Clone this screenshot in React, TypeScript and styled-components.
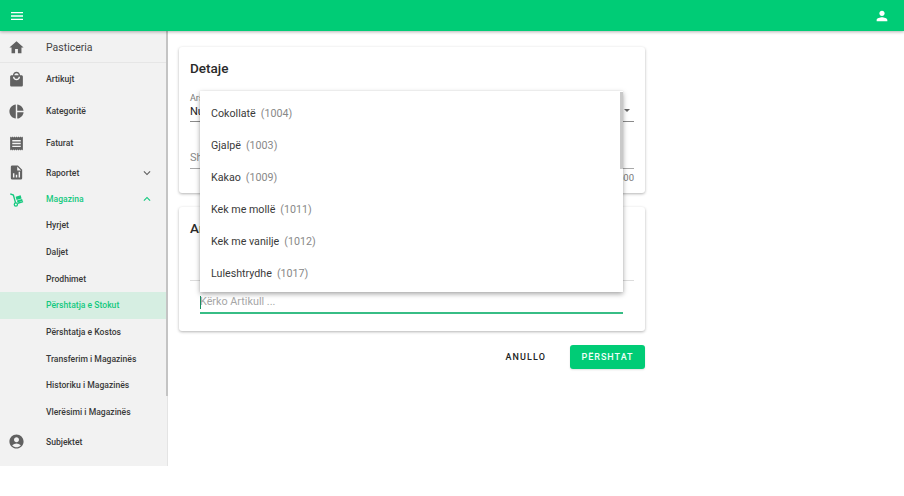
import styled, {createGlobalStyle} from "styled-components";
import type {ReactNode} from "react";
import {
    MdAccountCircle,
    MdExpandLess,
    MdExpandMore,
    MdHome,
    MdLocalMall,
    MdMenu,
    MdPerson,
    MdPieChart,
    MdReceipt,
} from "react-icons/md";

const GREEN = "#00cc76";

const GlobalStyle = createGlobalStyle`
    html, body {
        margin: 0;
        padding: 0;
        height: 100%;
        background: #fff;
        font-family: Roboto, "Liberation Sans", sans-serif;
        overflow: hidden;
    }
    * {
        box-sizing: border-box;
    }
`;

const Header = styled.header`
    display: flex;
    align-items: center;
    justify-content: space-between;
    height: 31px;
    padding: 0 14px 0 9px;
    background: ${GREEN};
    color: #fff;
    box-shadow: 0 1px 3px rgba(0, 0, 0, 0.3);
    position: relative;
    z-index: 2;
`;

const Body = styled.div`
    display: flex;
    align-items: flex-start;
`;

const Sidebar = styled.nav`
    position: relative;
    width: 168px;
    flex-shrink: 0;
    height: 435px;
    background: #f2f2f2;
    border-right: 1px solid #e4e4e4;
`;

const ScrollThumb = styled.div`
    position: absolute;
    top: 0;
    right: -1px;
    width: 2px;
    height: 365px;
    background: #c4c4c4;
`;

const BrandRow = styled.div`
    display: flex;
    align-items: center;
    height: 32px;
    padding: 1px 0 0 8px;
    border-bottom: 1px solid #e6e6e6;
    color: #616161;
`;

const BrandName = styled.span`
    margin-left: 21px;
    font-size: 10.5px;
    color: #444;
`;

const NavRow = styled.div<{$height: number; $active?: boolean; $selected?: boolean}>`
    display: flex;
    align-items: center;
    height: ${p => p.$height}px;
    padding: 0 13px 0 8px;
    font-size: 8.6px;
    font-weight: 500;
    color: ${p => (p.$active || p.$selected ? "#14c97f" : "#3a3a3a")};
    background: ${p => (p.$selected ? "#d6eee2" : "transparent")};
`;

const NavIcon = styled.span<{$active?: boolean}>`
    display: flex;
    align-items: center;
    justify-content: center;
    width: 17px;
    height: 17px;
    margin-right: 21px;
    color: ${p => (p.$active ? "#14c97f" : "#616161")};
`;

const NavLabel = styled.span<{$sub?: boolean}>`
    flex: 1;
    margin-left: ${p => (p.$sub ? "38px" : "0")};
    white-space: nowrap;
`;

const Chevron = styled.span<{$active?: boolean}>`
    display: flex;
    color: ${p => (p.$active ? "#14c97f" : "#616161")};
`;

const Main = styled.main`
    width: 477px;
    padding: 16px 0 0 11px;
`;

const Card = styled.section`
    background: #fff;
    border-radius: 3px;
    padding: 0 11px;
    margin-bottom: 14px;
    box-shadow: 0 1px 3px rgba(0, 0, 0, 0.3);
`;

const DetailsCard = styled(Card)`
    height: 146px;
    padding-top: 13px;
`;

const ItemsCard = styled(Card)`
    height: 124px;
    padding-top: 13px;
`;

const CardTitle = styled.h2`
    margin: 0;
    font-size: 13.5px;
    line-height: 17px;
    font-weight: 500;
    color: #2a2a2a;
`;

const SelectField = styled.div`
    margin-top: 16px;
    height: 29px;
    border-bottom: 1px solid #8a8a8a;
    position: relative;
`;

const FieldLabel = styled.div`
    font-size: 9px;
    line-height: 10px;
    color: #777;
`;

const FieldValue = styled.div`
    margin-top: 2px;
    font-size: 11px;
    line-height: 14px;
    color: #222;
`;

const SelectArrow = styled.span`
    position: absolute;
    right: 4px;
    top: 16px;
    width: 0;
    height: 0;
    border-left: 3.5px solid transparent;
    border-right: 3.5px solid transparent;
    border-top: 3.5px solid #666;
`;

const NotesField = styled.div`
    margin-top: 29px;
    height: 18px;
    border-bottom: 1px solid #a8a8a8;
    font-size: 11px;
    line-height: 14px;
    color: #888;
`;

const Counter = styled.div`
    margin-top: 3px;
    text-align: right;
    font-size: 9.5px;
    line-height: 11px;
    color: #777;
`;

const Divider = styled.div`
    margin-top: 43px;
    height: 1px;
    background: #dcdcdc;
`;

const SearchField = styled.div`
    position: relative;
    margin: 12px 11px 0 10px;
    height: 21px;
    border-bottom: 2px solid #37bd85;
    font-size: 10.8px;
    line-height: 18px;
    color: #a6a6a6;
`;

const Caret = styled.span`
    position: absolute;
    left: 0;
    top: 3px;
    width: 1px;
    height: 13px;
    background: #1a8f5f;
`;

const Suggestions = styled.ul`
    position: absolute;
    left: 0;
    right: 0;
    bottom: 20px;
    height: 201px;
    margin: 0;
    padding: 7px 0 0;
    list-style: none;
    background: #fff;
    box-shadow: 0 2px 5px rgba(0, 0, 0, 0.35), 0 0 1px rgba(0, 0, 0, 0.1);
    z-index: 3;
`;

const SuggestionsThumb = styled.li`
    position: absolute;
    top: 1px;
    right: 0;
    width: 3px;
    height: 77px;
    background: #c9c9c9;
`;

const Suggestion = styled.li`
    display: flex;
    align-items: center;
    gap: 5px;
    height: 32px;
    padding: 0 11px;
    font-size: 10.7px;
    color: #3a3a3a;
`;

const Code = styled.span`
    color: #888;
`;

const Actions = styled.div`
    display: flex;
    justify-content: flex-end;
    align-items: center;
    gap: 24px;
`;

const TextButton = styled.button`
    border: none;
    background: none;
    padding: 0;
    font: 500 9px Roboto, sans-serif;
    letter-spacing: 1.1px;
    color: #222;
`;

const PrimaryButton = styled.button`
    width: 75px;
    height: 24px;
    border: none;
    border-radius: 3px;
    background: ${GREEN};
    font: 500 9px Roboto, sans-serif;
    letter-spacing: 1px;
    color: #f2fff9;
    box-shadow: 0 1px 2px rgba(0, 0, 0, 0.12);
`;

// no matching material icon in the pack, so these two are drawn
const ReportIcon = () => (
    <svg viewBox="0 0 24 24" width="17" height="17" fill="currentColor">
        <path d="M14 2H6a2 2 0 0 0-2 2v16a2 2 0 0 0 2 2h12a2 2 0 0 0 2-2V8l-6-6zm-5 17H7v-6h2v6zm4 0h-2v-4h2v4zm4 0h-2v-8h2v8zM13 9V3.5L18.5 9H13z"/>
    </svg>
);

const DollyIcon = () => (
    <svg viewBox="0 0 24 24" width="15" height="15" fill="none" stroke="currentColor">
        <path d="M2 3 7 5l3.5 12.5" strokeWidth="2.2"/>
        <circle cx="11" cy="20" r="2.6" strokeWidth="2"/>
        <path d="m14 18 8.5-2.6" strokeWidth="2.2"/>
        <path d="m10.6 7.6 8-2.4 1.5 5-8 2.4z M12.6 13.6l8.4-2.5 1 3-8.4 2.5z" fill="currentColor" stroke="none"/>
    </svg>
);

const subItems = [
    "Hyrjet",
    "Daljet",
    "Prodhimet",
    "Përshtatja e Stokut",
    "Përshtatja e Kostos",
    "Transferim i Magazinës",
    "Historiku i Magazinës",
    "Vlerësimi i Magazinës",
];

const products = [
    {name: "Cokollatë", code: 1004},
    {name: "Gjalpë", code: 1003},
    {name: "Kakao", code: 1009},
    {name: "Kek me mollë", code: 1011},
    {name: "Kek me vanilje", code: 1012},
    {name: "Luleshtrydhe", code: 1017},
];

function NavItem(props: {icon: ReactNode; label: string; height: number; active?: boolean; chevron?: ReactNode}) {
    return (
        <NavRow $height={props.height} $active={props.active}>
            <NavIcon $active={props.active}>{props.icon}</NavIcon>
            <NavLabel>{props.label}</NavLabel>
            {props.chevron && <Chevron $active={props.active}>{props.chevron}</Chevron>}
        </NavRow>
    );
}

export default function App() {
    return (
        <>
            <GlobalStyle/>
            <Header>
                <MdMenu size={16}/>
                <MdPerson size={16}/>
            </Header>
            <Body>
                <Sidebar>
                    <ScrollThumb/>
                    <BrandRow>
                        <MdHome size={17}/>
                        <BrandName>Pasticeria</BrandName>
                    </BrandRow>
                    <NavItem icon={<MdLocalMall size={17}/>} label="Artikujt" height={32}/>
                    <NavItem icon={<MdPieChart size={17}/>} label="Kategoritë" height={32}/>
                    <NavItem icon={<MdReceipt size={17}/>} label="Faturat" height={32}/>
                    <NavItem icon={<ReportIcon/>} label="Raportet" height={27} chevron={<MdExpandMore size={14}/>}/>
                    <NavItem icon={<DollyIcon/>} label="Magazina" height={26} active chevron={<MdExpandLess size={14}/>}/>
                    {subItems.map(item => (
                        <NavRow key={item} $height={26.7} $selected={item === "Përshtatja e Stokut"}>
                            <NavLabel $sub>{item}</NavLabel>
                        </NavRow>
                    ))}
                    <NavItem icon={<MdAccountCircle size={17}/>} label="Subjektet" height={32}/>
                </Sidebar>
                <Main>
                    <DetailsCard>
                        <CardTitle>Detaje</CardTitle>
                        <SelectField>
                            <FieldLabel>Arsyeja</FieldLabel>
                            <FieldValue>Numërim</FieldValue>
                            <SelectArrow/>
                        </SelectField>
                        <NotesField>Shënime</NotesField>
                        <Counter>0/500</Counter>
                    </DetailsCard>
                    <ItemsCard>
                        <CardTitle>Artikujt</CardTitle>
                        <Divider/>
                        <SearchField>
                            <Caret/>
                            Kërko Artikull ...
                            <Suggestions>
                                <SuggestionsThumb/>
                                {products.map(p => (
                                    <Suggestion key={p.code}>
                                        {p.name}
                                        <Code>({p.code})</Code>
                                    </Suggestion>
                                ))}
                            </Suggestions>
                        </SearchField>
                    </ItemsCard>
                    <Actions>
                        <TextButton>ANULLO</TextButton>
                        <PrimaryButton>PËRSHTAT</PrimaryButton>
                    </Actions>
                </Main>
            </Body>
        </>
    );
}
